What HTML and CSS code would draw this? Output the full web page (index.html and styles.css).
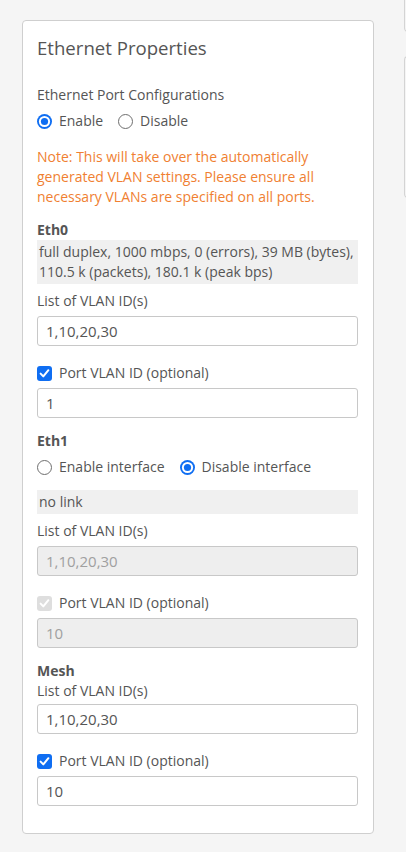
FILE: index.html
```html
<!DOCTYPE html>
<html>
<head>
<meta charset="utf-8">
<link rel="stylesheet" href="styles.css">
</head>
<body>
<div class="page">
  <div class="card">
    <h2 class="title">Ethernet Properties</h2>
    <div class="label">Ethernet Port Configurations</div>
    <div class="radios">
      <label class="opt"><svg class="ico" viewBox="0 0 15 15"><circle cx="7.5" cy="7.5" r="7.5" fill="#0f6ef2"/><circle cx="7.5" cy="7.5" r="5.6" fill="#fff"/><circle cx="7.5" cy="7.5" r="3.6" fill="#0f6ef2"/></svg>Enable</label>
      <label class="opt"><svg class="ico" viewBox="0 0 15 15"><circle cx="7.5" cy="7.5" r="7" fill="#fff" stroke="#6e6e6e" stroke-width="1"/></svg>Disable</label>
    </div>
    <p class="note">Note: This will take over the automatically generated VLAN settings. Please ensure all necessary VLANs are specified on all ports.</p>

    <div class="section">Eth0</div>
    <div class="status">full duplex, 1000 mbps, 0 (errors), 39 MB (bytes), 110.5 k (packets), 180.1 k (peak bps)</div>
    <div class="label field-label">List of VLAN ID(s)</div>
    <input class="input" type="text" value="1,10,20,30">
    <label class="opt check-row"><svg class="ico" viewBox="0 0 15 15"><rect width="15" height="15" rx="3" fill="#0f6ef2"/><path d="M3.6 7.6 L6.3 10.4 L11.4 4.2" fill="none" stroke="#fff" stroke-width="2" stroke-linecap="round" stroke-linejoin="round"/></svg>Port VLAN ID (optional)</label>
    <input class="input" type="text" value="1">

    <div class="section gap-top">Eth1</div>
    <div class="radios">
      <label class="opt"><svg class="ico" viewBox="0 0 15 15"><circle cx="7.5" cy="7.5" r="7" fill="#fff" stroke="#6e6e6e" stroke-width="1"/></svg>Enable interface</label>
      <label class="opt"><svg class="ico" viewBox="0 0 15 15"><circle cx="7.5" cy="7.5" r="7.5" fill="#0f6ef2"/><circle cx="7.5" cy="7.5" r="5.6" fill="#fff"/><circle cx="7.5" cy="7.5" r="3.6" fill="#0f6ef2"/></svg>Disable interface</label>
    </div>
    <div class="status single">no link</div>
    <div class="label field-label">List of VLAN ID(s)</div>
    <input class="input" type="text" value="1,10,20,30" disabled>
    <label class="opt check-row"><svg class="ico" viewBox="0 0 15 15"><rect width="15" height="15" rx="3" fill="#dedede"/><path d="M3.6 7.6 L6.3 10.4 L11.4 4.2" fill="none" stroke="#fff" stroke-width="2" stroke-linecap="round" stroke-linejoin="round"/></svg>Port VLAN ID (optional)</label>
    <input class="input" type="text" value="10" disabled>

    <div class="section gap-top">Mesh</div>
    <div class="label">List of VLAN ID(s)</div>
    <input class="input tight" type="text" value="1,10,20,30">
    <label class="opt check-row"><svg class="ico" viewBox="0 0 15 15"><rect width="15" height="15" rx="3" fill="#0f6ef2"/><path d="M3.6 7.6 L6.3 10.4 L11.4 4.2" fill="none" stroke="#fff" stroke-width="2" stroke-linecap="round" stroke-linejoin="round"/></svg>Port VLAN ID (optional)</label>
    <input class="input" type="text" value="10">
  </div>
  <div class="side">
    <div class="side-top"></div>
    <div class="side-box"></div>
  </div>
</div>
</body>
</html>
```

FILE: styles.css
```css
html, body {
  margin: 0;
  padding: 0;
  background: #f5f5f5;
  font-family: "Open Sans", "Noto Sans", sans-serif;
  color: #555;
  font-size: 14px;
}
.page {
  display: flex;
  align-items: flex-start;
  gap: 30px;
  padding: 20px 0 0 22px;
  overflow: hidden;
  height: 852px;
  box-sizing: border-box;
}
.card {
  flex: 0 0 352px;
  box-sizing: border-box;
  background: #fff;
  border: 1px solid #cfcfcf;
  border-radius: 4px;
  padding: 14px 15px 27px 14px;
}
.title {
  margin: 0 0 24px;
  font-size: 18.6px;
  font-weight: 400;
  line-height: 26px;
  color: #555;
}
.label {
  line-height: 20px;
}
.radios {
  display: flex;
  gap: 15px;
  margin: 6px 0 0;
  line-height: 20px;
}
.opt {
  display: flex;
  align-items: center;
  gap: 7px;
  line-height: 20px;
}
.ico {
  width: 15px;
  height: 15px;
  flex: 0 0 15px;
}
.note {
  margin: 16px 0 13px;
  color: #f07f32;
  line-height: 20px;
}
.section {
  font-weight: 700;
  line-height: 20px;
}
.gap-top {
  margin-top: 13px;
}
.status {
  background: #f0f0f0;
  padding: 2px 2px;
  line-height: 20px;
}
.status.single {
  margin-top: 13px;
}
.field-label {
  margin-top: 7px;
}
.input {
  display: block;
  width: 100%;
  box-sizing: border-box;
  height: 30px;
  margin: 5px 0 0;
  padding: 0 8px;
  border: 1px solid #c8c8c8;
  border-radius: 3px;
  font-family: "Open Sans", "Noto Sans", sans-serif;
  font-size: 15px;
  color: #555;
  background: #fff;
  outline: none;
}
.input.tight {
  margin-top: 3px;
}
.input:disabled {
  background: #eeeeee;
  color: #a0a0a0;
}
.check-row {
  margin-top: 17px;
}
.side {
  flex: 0 0 40px;
  margin-top: -20px;
}
.side-top {
  height: 31px;
  border-left: 1px solid #d4d4d4;
  border-bottom: 1px solid #d4d4d4;
  border-bottom-left-radius: 4px;
}
.side-box {
  margin-top: 24px;
  height: 140px;
  border-left: 1px solid #d4d4d4;
  border-top: 1px solid #d4d4d4;
  border-bottom: 1px solid #d4d4d4;
  border-radius: 4px 0 0 4px;
}
```
